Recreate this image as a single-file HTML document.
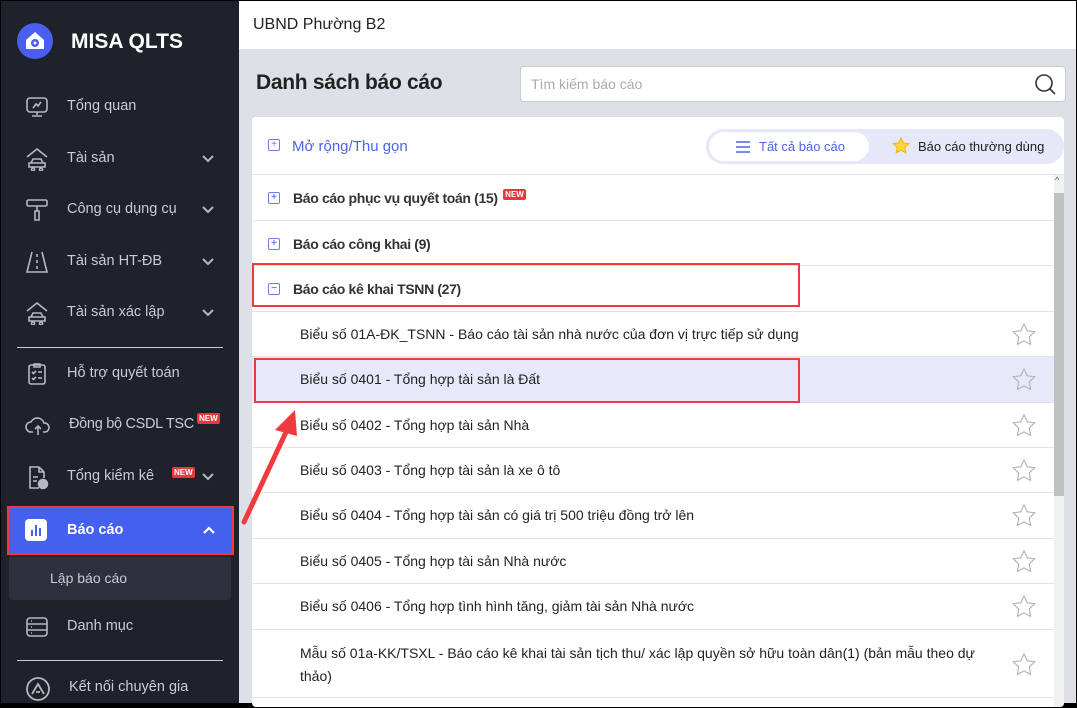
<!DOCTYPE html>
<html><head><meta charset="utf-8"><style>
*{box-sizing:border-box;margin:0;padding:0}
body{width:1077px;height:704px;overflow:hidden;font-family:"Liberation Sans",sans-serif;background:#000;position:relative}
#sb{position:absolute;left:1px;top:1px;width:238px;height:702px;background:#1e222a;color:#c9ccd2}
.logo{position:absolute;left:16px;top:22px;width:36px;height:36px;border-radius:50%;background:#4a5ef0}
.brand{position:absolute;left:70px;top:29px;font-size:21px;font-weight:bold;color:#fff}
.mi{position:absolute;left:0;width:238px;height:40px;font-size:14.5px;color:#c9ccd2}
.mi .t{position:absolute;left:66px;top:11px}
.mi svg{position:absolute;left:24px;top:8px}
.chev{position:absolute;left:200px;top:12px}
.new{position:absolute;background:#e8383d;color:#fff;font-size:8px;font-weight:bold;padding:1px 2px;border-radius:2px}
.hr{position:absolute;left:16px;width:206px;height:1px;background:#c9ccd2}
#main{position:absolute;left:239px;top:1px;width:837px;height:702px;background:#dde0e7}
#top{position:absolute;left:0;top:0;width:837px;height:48px;background:#fff;font-size:16px;color:#222;padding:15px 0 0 14px}
h1{position:absolute;left:17px;top:70px;font-size:21px;color:#222;letter-spacing:-0.3px}
#search{position:absolute;left:281px;top:65px;width:546px;height:36px;background:#fff;border:1px solid #c9ccd2;border-radius:4px;font-size:14px;color:#aaa;padding:9px 10px}
#card{position:absolute;left:13px;top:116px;width:812px;height:590px;background:#fff;border-radius:4px;overflow:hidden}
.row{position:absolute;left:0;width:802px;border-bottom:1px solid #e1e3e7;font-size:14px;color:#222}
.g{font-weight:bold;font-size:14px;color:#333;letter-spacing:-0.35px}
.pb{position:absolute;left:16px;width:12px;height:12px;border:1px solid #6b7de8;border-radius:2px;font-size:10px;line-height:10px;text-align:center;color:#6b7de8;letter-spacing:0}
.g .new{position:relative;top:-6px;left:2px;letter-spacing:0}
</style></head><body>
<div id="sb">
<div class="logo"><svg width="36" height="36" viewBox="0 0 36 36"><path d="M9 17 L18 9 L27 17 V26 H9Z" fill="#fff"/><circle cx="18" cy="20" r="4" fill="#4a5ef0"/><circle cx="18" cy="20" r="1.5" fill="#fff"/></svg></div>
<div class="brand">MISA QLTS</div>

<div class="mi" style="top:86px"><svg width="24" height="24" fill="none" stroke="#b5b9c0" stroke-width="1.6"><rect x="2" y="3" width="20" height="14" rx="3"/><path d="M8 13l3-4 2 2 3-4M12 17v3M7 21h10"/></svg><span class="t">Tổng quan</span></div>
<div class="mi" style="top:138px"><svg width="24" height="24" fill="none" stroke="#b5b9c0" stroke-width="1.6"><path d="M2 10l10-8 10 8M6 16l2-4h8l2 4M4 16h16v4H4zM8 21a1.5 1.5 0 1 0 .1 0M16 21a1.5 1.5 0 1 0 .1 0"/></svg><span class="t">Tài sản</span><svg class="chev" width="14" height="14" style="left:200px;top:13px" fill="none" stroke="#b5b9c0" stroke-width="2"><path d="M2 4l5 5 5-5"/></svg></div>
<div class="mi" style="top:189px"><svg width="24" height="24" fill="none" stroke="#b5b9c0" stroke-width="1.6"><rect x="2" y="2" width="20" height="6" rx="1.5"/><path d="M12 8v5M10 13h4v9h-4z"/></svg><span class="t">Công cụ dụng cụ</span><svg class="chev" width="14" height="14" style="left:200px;top:13px" fill="none" stroke="#b5b9c0" stroke-width="2"><path d="M2 4l5 5 5-5"/></svg></div>
<div class="mi" style="top:241px"><svg width="24" height="24" fill="none" stroke="#b5b9c0" stroke-width="1.6"><path d="M7 2L2 22h20L17 2M12 4v3M12 10v3M12 16v3"/></svg><span class="t">Tài sản HT-ĐB</span><svg class="chev" width="14" height="14" style="left:200px;top:13px" fill="none" stroke="#b5b9c0" stroke-width="2"><path d="M2 4l5 5 5-5"/></svg></div>
<div class="mi" style="top:292px"><svg width="24" height="24" fill="none" stroke="#b5b9c0" stroke-width="1.6"><path d="M2 10l10-8 10 8M6 16l2-4h8l2 4M4 16h16v4H4zM8 21a1.5 1.5 0 1 0 .1 0M16 21a1.5 1.5 0 1 0 .1 0"/></svg><span class="t">Tài sản xác lập</span><svg class="chev" width="14" height="14" style="left:200px;top:13px" fill="none" stroke="#b5b9c0" stroke-width="2"><path d="M2 4l5 5 5-5"/></svg></div>
<div class="hr" style="top:346px"></div>
<div class="mi" style="top:353px"><svg width="24" height="24" fill="none" stroke="#b5b9c0" stroke-width="1.6"><rect x="4" y="3" width="16" height="19" rx="2"/><path d="M9 2h6v3H9zM7 10l1.5 1.5L11 9M13 10h4M7 16l1.5 1.5L11 15M13 16h4"/></svg><span class="t">Hỗ trợ quyết toán</span></div>
<div class="mi" style="top:404px"><svg width="26" height="24" fill="none" stroke="#b5b9c0" stroke-width="1.6"><path d="M8 19H6a5 5 0 0 1 0-10 7 7 0 0 1 13 1 4.5 4.5 0 0 1 1 9h-2M13 22v-9M10 16l3-3 3 3"/></svg><span class="t" style="left:68px;letter-spacing:-0.3px">Đồng bộ CSDL TSC</span><span class="new" style="left:196px;top:8px">NEW</span></div>
<div class="mi" style="top:456px"><svg width="24" height="26" fill="none" stroke="#b5b9c0" stroke-width="1.6"><path d="M14 2H5v21h9M14 2l5 5v6M14 2v5h5M8 12h5M8 16h4"/><circle cx="18" cy="19" r="4.5" fill="#b5b9c0"/></svg><span class="t">Tổng kiểm kê</span><span class="new" style="left:171px;top:10px">NEW</span><svg class="chev" width="14" height="14" style="left:200px;top:13px" fill="none" stroke="#b5b9c0" stroke-width="2"><path d="M2 4l5 5 5-5"/></svg></div>
<div style="position:absolute;left:6px;top:505px;width:227px;height:49px;border:2px solid #f03a3f"></div>
<div class="mi" style="top:507px;left:8px;width:223px;height:45px;background:#4361ee;color:#fff"><svg width="22" height="22" style="left:16px;top:11px"><rect width="22" height="22" rx="4" fill="#fff"/><path d="M7 11v6M11 6v11M15 9v8" stroke="#4361ee" stroke-width="2"/></svg><span class="t" style="left:58px;top:14px;font-weight:bold">Báo cáo</span><svg class="chev" width="14" height="14" style="left:193px;top:15px" fill="none" stroke="#fff" stroke-width="2.2"><path d="M2 10l5-5 5 5"/></svg></div>
<div style="position:absolute;left:8px;top:556px;width:222px;height:43px;background:#2c313d;border-radius:0 0 4px 4px;color:#c9ccd2;font-size:14px;padding:13px 0 0 41px">Lập báo cáo</div>
<div class="mi" style="top:606px"><svg width="24" height="24" fill="none" stroke="#b5b9c0" stroke-width="1.6"><rect x="2" y="3" width="20" height="18" rx="3"/><path d="M2 9h20M2 15h20M6 6h1M6 12h1M6 18h1"/></svg><span class="t">Danh mục</span></div>
<div class="hr" style="top:659px"></div>
<div class="mi" style="top:667px"><svg width="26" height="26" fill="none" stroke="#b5b9c0" stroke-width="1.8"><circle cx="13" cy="13" r="11"/><path d="M7 18l6-10 6 10M11 16h4"/></svg><span class="t" style="left:68px">Kết nối chuyên gia</span></div>
</div>

<div id="main">
<div id="top">UBND Phường B2</div>
<h1>Danh sách báo cáo</h1>
<div id="search">Tìm kiếm báo cáo<svg width="22" height="22" style="position:absolute;right:9px;top:6px" fill="none" stroke="#333" stroke-width="1.6"><circle cx="10" cy="10" r="8"/><path d="M16 16l5 5"/></svg></div>
<div id="card">
<div class="row" style="top:0;height:58px;width:812px"><span class="pb" style="top:22px">+</span><span style="position:absolute;left:40px;top:21px;color:#4b63e8;font-size:15px">Mở rộng/Thu gọn</span>
<div style="position:absolute;left:454px;top:12px;width:358px;height:35px;background:#e4e8f8;border-radius:18px"><div style="position:absolute;left:3px;top:3px;width:160px;height:29px;background:#fff;border-radius:15px;color:#4b63e8;font-size:13px;padding:7px 0 0 50px">Tất cả báo cáo<svg width="14" height="12" style="position:absolute;left:27px;top:9px" stroke="#4b63e8" stroke-width="1.5"><path d="M0 1h14M0 6h14M0 11h14"/></svg></div><span style="position:absolute;left:212px;top:10px;font-size:13px;color:#222">Báo cáo thường dùng</span><svg width="18" height="18" style="position:absolute;left:186px;top:8px"><path d="M9 1l2.4 5 5.4.6-4 3.8 1 5.4L9 13.2 4.2 15.8l1-5.4-4-3.8 5.4-.6z" fill="#ffd53d" stroke="#f2b705"/></svg></div></div>
<div class="row g" style="top:58px;height:46px"><span class="pb" style="top:17px">+</span><span style="position:absolute;left:41px;top:15px">Báo cáo phục vụ quyết toán (15) <span class="new">NEW</span></span></div>
<div class="row g" style="top:104px;height:45px"><span class="pb" style="top:17px">+</span><span style="position:absolute;left:41px;top:15px">Báo cáo công khai (9)</span></div>
<div class="row g" style="top:149px;height:46px"><span class="pb" style="top:17px">−</span><span style="position:absolute;left:41px;top:15px">Báo cáo kê khai TSNN (27)</span></div>
<div style="position:absolute;left:0;top:146px;width:548px;height:44px;border:2px solid #f03a3f"></div>

<div class="row" style="top:195px;height:45px"><span style="position:absolute;left:48px;top:14px">Biểu số 01A-ĐK_TSNN - Báo cáo tài sản nhà nước của đơn vị trực tiếp sử dụng</span></div>
<div class="row" style="top:240px;height:46px;background:#e6e9f9"><span style="position:absolute;left:48px;top:14px">Biểu số 0401 - Tổng hợp tài sản là Đất</span></div>
<div style="position:absolute;left:2px;top:241px;width:546px;height:45px;border:2px solid #f03a3f"></div>
<div class="row" style="top:286px;height:45px"><span style="position:absolute;left:48px;top:14px">Biểu số 0402 - Tổng hợp tài sản Nhà</span></div>
<div class="row" style="top:331px;height:45px"><span style="position:absolute;left:48px;top:14px">Biểu số 0403 - Tổng hợp tài sản là xe ô tô</span></div>
<div class="row" style="top:376px;height:46px"><span style="position:absolute;left:48px;top:14px">Biểu số 0404 - Tổng hợp tài sản có giá trị 500 triệu đồng trở lên</span></div>
<div class="row" style="top:422px;height:45px"><span style="position:absolute;left:48px;top:14px">Biểu số 0405 - Tổng hợp tài sản Nhà nước</span></div>
<div class="row" style="top:467px;height:46px"><span style="position:absolute;left:48px;top:14px">Biểu số 0406 - Tổng hợp tình hình tăng, giảm tài sản Nhà nước</span></div>
<div class="row" style="top:513px;height:68px"><span style="position:absolute;left:48px;top:12px;width:690px;line-height:23px">Mẫu số 01a-KK/TSXL - Báo cáo kê khai tài sản tịch thu/ xác lập quyền sở hữu toàn dân(1) (bản mẫu theo dự thảo)</span></div>

<svg width="30" height="400" style="position:absolute;left:760px;top:206px" fill="none" stroke="#b5b5b5" stroke-width="1.2">
<g id="s"><path d="M12 1l3.3 6.8 7.4 1-5.4 5.2 1.3 7.4L12 17.9 5.4 21.4l1.3-7.4L1.3 8.8l7.4-1z"/></g>
<use href="#s" y="45"/><use href="#s" y="91"/><use href="#s" y="136"/><use href="#s" y="181"/><use href="#s" y="227"/><use href="#s" y="272"/><use href="#s" y="330"/>
</svg>
<div style="position:absolute;left:802px;top:58px;width:10px;height:532px;background:#f1f1f1"></div>
<div style="position:absolute;left:802px;top:76px;width:10px;height:303px;background:#c1c1c1"></div>
<span style="position:absolute;left:803px;top:58px;font-size:9px;color:#555">^</span>
</div>
</div>
<svg width="80" height="140" style="position:absolute;left:235px;top:400px">
<path d="M9 122L52 30" stroke="#f03a3f" stroke-width="5" stroke-linecap="round"/>
<path d="M60 10L40 30L62 36Z" fill="#f03a3f"/>
</svg>
</body></html>
